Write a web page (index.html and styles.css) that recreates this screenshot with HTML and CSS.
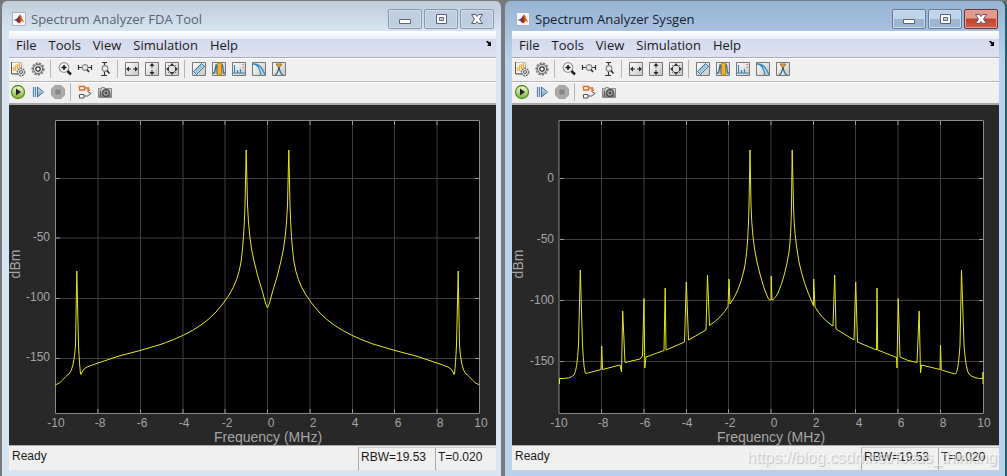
FILE: index.html
```html
<!DOCTYPE html>
<html lang="en">
<head>
<meta charset="utf-8">
<title>Spectrum Analyzer</title>
<link rel="stylesheet" href="styles.css">
</head>
<body>
<svg class="defs" aria-hidden="true">
  <defs>
    <linearGradient id="g-tile" x1="0" y1="0" x2="1" y2="1"><stop offset="0" stop-color="#fff"/><stop offset="1" stop-color="#c4c4c4"/></linearGradient>
    <linearGradient id="g-play" x1="0" y1="0" x2="0" y2="1"><stop offset="0" stop-color="#f4fadf"/><stop offset="1" stop-color="#7db82e"/></linearGradient>
    <linearGradient id="g-step" x1="0" y1="0" x2="0" y2="1"><stop offset="0" stop-color="#d5e8f6"/><stop offset="1" stop-color="#6a9cc8"/></linearGradient>
    <linearGradient id="g-cam" x1="0" y1="0" x2="0" y2="1"><stop offset="0" stop-color="#ddd"/><stop offset="1" stop-color="#777"/></linearGradient>
  </defs>
  <symbol id="logo" viewBox="0 0 14 14"><path d="M.5.5h13v13H.5z" fill="#f7f7f7" stroke="#a9b4c0"/><path d="M1.500 8l3.500-1.500 3-4L6 10.500 4.500 9z" fill="#2b78ac"/><path d="M5 7l3-4.500L6.500 11 4.500 9z" fill="#6b2b3c"/><path d="M8 2.500c1.500 1 2.500 5 4.500 8L10 9 7 11.500 6 10z" fill="#e8641b"/><path d="M8 3l.5 7L7 11.500 6 10z" fill="#9e2a1c"/></symbol>
  <symbol id="gear" viewBox="0 0 16 16"><circle cx="8" cy="8" r="5.800" fill="none" stroke="#777" stroke-width="1.500" stroke-dasharray="2.300 1.150"/><circle cx="8" cy="8" r="4.600" fill="#ddd" stroke="#666"/><circle cx="8" cy="8" r="2.200" fill="#fff" stroke="#333" stroke-width="1.200"/></symbol>
  <symbol id="config" viewBox="0 0 16 16"><path d="M1.500 1.500h10v11h-10z" fill="#fbf7ed" stroke="#bbb"/><path d="M1.500 1v12H9" fill="none" stroke="#555"/><path d="M3.500 10V6M5.500 10V4M7.500 8V3M9.500 7V2" fill="none" stroke="#efb04b" stroke-width="1.400"/><circle cx="11" cy="11" r="3.700" fill="#ddd" stroke="#777" stroke-width="1.400" stroke-dasharray="2 .7"/><circle cx="11" cy="11" r="1.500" fill="#fff" stroke="#555"/></symbol>
  <symbol id="zoom" viewBox="0 0 16 16"><circle cx="7" cy="6.500" r="4.800" fill="#f5f5f5" stroke="#999" stroke-width="1.200"/><path d="M4.500 6.500h5M7 4v5" stroke="#111" stroke-width="1.500"/><path d="M10.500 10l3.500 3.500" stroke="#222" stroke-width="2.500"/></symbol>
  <symbol id="zoom-x" viewBox="0 0 16 16"><path d="M1.500 4v5M14.500 4v5M2 6.500h3M11 6.500h3" fill="none" stroke="#333" stroke-width="1.200"/><circle cx="8" cy="6.500" r="2.800" fill="#eee" stroke="#888" stroke-width="1.200"/><path d="M10 8.500l2 2.500" stroke="#333" stroke-width="1.600"/></symbol>
  <symbol id="zoom-y" viewBox="0 0 16 16"><path d="M5 1.500h5M7.500 1v4M4 14.500h6M7.500 11v3" stroke="#333" stroke-width="1.200"/><circle cx="8" cy="7.500" r="2.800" fill="#eee" stroke="#888" stroke-width="1.200"/><path d="M10 9.500l2.500 3" stroke="#333" stroke-width="1.600"/></symbol>
  <symbol id="tile" viewBox="0 0 16 16"><path d="M1.500 1.500h13v13h-13z" fill="url(#g-tile)" stroke="#777"/></symbol>
  <symbol id="fit-x" viewBox="0 0 16 16"><use href="#tile"/><path d="M2 8l3-2.500v5zM14 8l-3-2.500v5z" fill="#222"/><path d="M4 8h3M9 8h3" stroke="#333"/></symbol>
  <symbol id="fit-y" viewBox="0 0 16 16"><use href="#tile"/><path d="M8 2l2.500 3h-5zM8 14l2.500-3h-5z" fill="#222"/><path d="M8 4v3M8 9v3" stroke="#333"/></symbol>
  <symbol id="fit-xy" viewBox="0 0 16 16"><use href="#tile"/><path d="M8 2l2.500 3h-5zM8 14l2.500-3h-5zM2 8l3-2.500v5zM14 8l-3-2.500v5z" fill="#333"/><path d="M4 4l2 2M12 4l-2 2M4 12l2-2M12 12l-2-2" stroke="#777"/></symbol>
  <symbol id="ruler" viewBox="0 0 16 16"><use href="#tile"/><path d="M2.500 10.500l8-8 3 3-8 8z" fill="#a9d0e8" stroke="#446f91"/><path d="M5 8.500l1 1M7 6.500l1 1M9 4.500l1 1" stroke="#446f91"/></symbol>
  <symbol id="peaks" viewBox="0 0 16 16"><use href="#tile"/><path d="M2 12h1.500l1.500-8h1v9M10 13V4h1.500l1 8H14" fill="none" stroke="#2f759f" stroke-width="1.400"/><path d="M6.500 2h4v12h-4z" fill="#f4ad25" stroke="#c17a0c" stroke-width=".8"/></symbol>
  <symbol id="distort" viewBox="0 0 16 16"><use href="#tile"/><path d="M2 12h1.500V4v8h3V9v3h3V8v4H14" fill="none" stroke="#3985b4" stroke-width="1.200"/><path d="M11.500 3.500h1.500M11.500 6.500h1.500" stroke="#c77"/></symbol>
  <symbol id="ccdf" viewBox="0 0 16 16"><use href="#tile"/><path d="M2 3c5 0 7 5 8 11M2 3c7-1 10 6 12 11" fill="none" stroke="#338fc7" stroke-width="1.300"/></symbol>
  <symbol id="mask" viewBox="0 0 16 16"><use href="#tile"/><path d="M5 3h6L8 7z" fill="#e7a52b" stroke="#a57828"/><path d="M4 14c3-1 3-4 4-8 1 4 1 7 4 8" fill="#dbeaf2" stroke="#39627a" stroke-width="1.200"/></symbol>
  <symbol id="play" viewBox="0 0 16 16"><circle cx="8" cy="8" r="6.500" fill="url(#g-play)" stroke="#5b8a28" stroke-width="1.300"/><path d="M6 4.500l5 3.500-5 3.500z" fill="#222"/></symbol>
  <symbol id="step" viewBox="0 0 16 16"><path d="M3.500 3v10M5.500 3v10" stroke="#5583aa" stroke-width="1.200"/><path d="M7.500 3l6 5-6 5z" fill="url(#g-step)" stroke="#4677a0"/></symbol>
  <symbol id="stop" viewBox="0 0 16 16"><path d="M5 1.500h6L14.500 5v6L11 14.500H5L1.500 11V5z" fill="#aaa" stroke="#a0a0a0"/><path d="M5.500 5.500h5v5h-5z" fill="#858585"/></symbol>
  <symbol id="model" viewBox="0 0 16 16"><path d="M2.500 2.500h5v3.500h-5z" fill="#fff" stroke="#e16b24" stroke-width="1.300"/><path d="M7.500 4h4v2.500" fill="none" stroke="#e16b24" stroke-width="1.300"/><path d="M9 5.500h5l-2.500 2z" fill="#e16b24"/><path d="M2.500 10.500H7V14H2.500z" fill="#fff" stroke="#555"/><path d="M7 12h3.500l3.500-2.500-3.500-2" fill="none" stroke="#555"/></symbol>
  <symbol id="camera" viewBox="0 0 16 16"><path d="M1.500 4.500h3v-1h3v1h7v9h-13z" fill="url(#g-cam)" stroke="#8a8a8a"/><circle cx="9" cy="9" r="3.300" fill="#aaa" stroke="#444" stroke-width="1.200"/><circle cx="9" cy="9" r="1.400" fill="#444"/><path d="M3.500 6.500v6" stroke="#666"/></symbol>
  <symbol id="min" viewBox="0 0 16 16"><path d="M2.500 8.500h11v4h-11z" fill="#fff" stroke="#5c6476"/></symbol>
  <symbol id="max" viewBox="0 0 16 16"><path d="M3.500 3.500h10v9h-10z" fill="#fff" stroke="#5c6476"/><path d="M6.500 6.500h4v3h-4z" fill="#c3d2e5" stroke="#5c6476"/></symbol>
  <symbol id="close" viewBox="0 0 16 16"><path d="M2.500 3.500h4l1.500 2 1.500-2h4L10.500 8l3 4.500h-4L8 10.500l-1.500 2h-4l3-4.500z" fill="#fff" stroke="#5c5c68" stroke-linejoin="round"/></symbol>
  <symbol id="dock" viewBox="0 0 8 8"><path d="M1 2h2l1.500 1.500L6 2.500V7H2l1.500-1.500z" fill="#000"/></symbol>
</svg>

<main class="desktop">
  <section class="window" aria-label="Spectrum Analyzer FDA Tool">
    <header class="titlebar">
      <svg class="logo"><use href="#logo"/></svg>
      <h1 class="title">Spectrum Analyzer FDA Tool</h1>
      <button class="caption" aria-label="Minimize"><svg class="icon"><use href="#min"/></svg></button>
      <button class="caption" aria-label="Maximize"><svg class="icon"><use href="#max"/></svg></button>
      <button class="caption caption-close" aria-label="Close"><svg class="icon"><use href="#close"/></svg></button>
    </header>
    <nav class="menu">
      <button class="menu-item">File</button><button class="menu-item">Tools</button><button class="menu-item">View</button><button class="menu-item">Simulation</button><button class="menu-item">Help</button>
      <button class="dock" aria-label="Dock"><svg class="dock-icon"><use href="#dock"/></svg></button>
    </nav>
    <div class="toolbar">
      <button class="tool" aria-label="Configuration"><svg class="icon"><use href="#config"/></svg></button>
      <button class="tool" aria-label="Style"><svg class="icon"><use href="#gear"/></svg></button>
      <span class="sep"></span>
      <button class="tool" aria-label="Zoom"><svg class="icon"><use href="#zoom"/></svg></button>
      <button class="tool" aria-label="Zoom X"><svg class="icon"><use href="#zoom-x"/></svg></button>
      <button class="tool" aria-label="Zoom Y"><svg class="icon"><use href="#zoom-y"/></svg></button>
      <span class="sep"></span>
      <button class="tool" aria-label="Fit X"><svg class="icon"><use href="#fit-x"/></svg></button>
      <button class="tool" aria-label="Fit Y"><svg class="icon"><use href="#fit-y"/></svg></button>
      <button class="tool" aria-label="Fit both"><svg class="icon"><use href="#fit-xy"/></svg></button>
      <span class="sep"></span>
      <button class="tool" aria-label="Cursor measurements"><svg class="icon"><use href="#ruler"/></svg></button>
      <button class="tool" aria-label="Channel measurements"><svg class="icon"><use href="#peaks"/></svg></button>
      <button class="tool" aria-label="Distortion"><svg class="icon"><use href="#distort"/></svg></button>
      <button class="tool" aria-label="CCDF"><svg class="icon"><use href="#ccdf"/></svg></button>
      <button class="tool" aria-label="Spectral mask"><svg class="icon"><use href="#mask"/></svg></button>
    </div>
    <div class="toolbar toolbar-run">
      <button class="tool" aria-label="Run"><svg class="icon"><use href="#play"/></svg></button>
      <button class="tool" aria-label="Step forward"><svg class="icon"><use href="#step"/></svg></button>
      <button class="tool" aria-label="Stop"><svg class="icon"><use href="#stop"/></svg></button>
      <span class="sep"></span>
      <button class="tool" aria-label="Highlight block"><svg class="icon"><use href="#model"/></svg></button>
      <button class="tool" aria-label="Snapshot"><svg class="icon"><use href="#camera"/></svg></button>
    </div>
    <svg class="chart" viewBox="9 105 487 340" role="img" aria-label="Power in dBm against frequency in MHz">
      <path class="plot-bg" d="M55 120h425v294H55z"/>
      <path class="grid" d="M98 121v293M140.500 121v293M183 121v293M225 121v293M267.500 121v293M310 121v293M352.500 121v293M394.500 121v293M437 121v293M56 178.500h423M56 238h423M56 298.500h423M56 358.500h423"/>
      <path class="frame" d="M55.500 120.500h424v293h-424z"/>
      <path class="ticks" d="M98 121v4M140.500 121v4M183 121v4M225 121v4M267.500 121v4M310 121v4M352.500 121v4M394.500 121v4M437 121v4M98 413v-4M140.500 413v-4M183 413v-4M225 413v-4M267.500 413v-4M310 413v-4M352.500 413v-4M394.500 413v-4M437 413v-4M56 178.500h4M56 238h4M56 298.500h4M56 358.500h4M479 178.500h-4M479 238h-4M479 298.500h-4M479 358.500h-4"/>
      <g id="half-fda"><path class="trace" d="M55.500 384.500C61 384 64 377 69 374Q74 369 75.500 345L76.800 271 78.500 345Q79.500 365 80.500 374Q81 376 82 372Q83 369 87 367Q92 365 98 363L119 356 140 350.500 162 344Q185 336 201 325Q217 314 229 295Q238 281 241 262Q244 240 245 205L246.200 150 247.500 205Q249 241 254 261Q257 275 262 290L265.500 303Q267 307 267.500 308"/></g>
      <use href="#half-fda" transform="translate(535 0) scale(-1 1)"/>
      <g class="tick-text tick-y"><text x="50" y="181">0</text><text x="50" y="241">-50</text><text x="50" y="301">-100</text><text x="50" y="361">-150</text></g>
      <g class="tick-text tick-x"><text x="56" y="427">-10</text><text x="100" y="427">-8</text><text x="142" y="427">-6</text><text x="184" y="427">-4</text><text x="227" y="427">-2</text><text x="271" y="427">0</text><text x="313" y="427">2</text><text x="355" y="427">4</text><text x="398" y="427">6</text><text x="440" y="427">8</text><text x="481" y="427">10</text></g>
      <text class="axis-text" x="268" y="442">Frequency (MHz)</text>
      <text class="axis-text" transform="translate(20 264) rotate(-90)">dBm</text>
    </svg>
    <footer class="status"><span class="ready">Ready</span><span class="cell cell-rbw">RBW=19.53</span><span class="cell">T=0.020</span></footer>
  </section>

  <section class="window window-active" aria-label="Spectrum Analyzer Sysgen">
    <header class="titlebar">
      <svg class="logo"><use href="#logo"/></svg>
      <h1 class="title">Spectrum Analyzer Sysgen</h1>
      <button class="caption" aria-label="Minimize"><svg class="icon"><use href="#min"/></svg></button>
      <button class="caption" aria-label="Maximize"><svg class="icon"><use href="#max"/></svg></button>
      <button class="caption caption-close" aria-label="Close"><svg class="icon"><use href="#close"/></svg></button>
    </header>
    <nav class="menu">
      <button class="menu-item">File</button><button class="menu-item">Tools</button><button class="menu-item">View</button><button class="menu-item">Simulation</button><button class="menu-item">Help</button>
      <button class="dock" aria-label="Dock"><svg class="dock-icon"><use href="#dock"/></svg></button>
    </nav>
    <div class="toolbar">
      <button class="tool" aria-label="Configuration"><svg class="icon"><use href="#config"/></svg></button>
      <button class="tool" aria-label="Style"><svg class="icon"><use href="#gear"/></svg></button>
      <span class="sep"></span>
      <button class="tool" aria-label="Zoom"><svg class="icon"><use href="#zoom"/></svg></button>
      <button class="tool" aria-label="Zoom X"><svg class="icon"><use href="#zoom-x"/></svg></button>
      <button class="tool" aria-label="Zoom Y"><svg class="icon"><use href="#zoom-y"/></svg></button>
      <span class="sep"></span>
      <button class="tool" aria-label="Fit X"><svg class="icon"><use href="#fit-x"/></svg></button>
      <button class="tool" aria-label="Fit Y"><svg class="icon"><use href="#fit-y"/></svg></button>
      <button class="tool" aria-label="Fit both"><svg class="icon"><use href="#fit-xy"/></svg></button>
      <span class="sep"></span>
      <button class="tool" aria-label="Cursor measurements"><svg class="icon"><use href="#ruler"/></svg></button>
      <button class="tool" aria-label="Channel measurements"><svg class="icon"><use href="#peaks"/></svg></button>
      <button class="tool" aria-label="Distortion"><svg class="icon"><use href="#distort"/></svg></button>
      <button class="tool" aria-label="CCDF"><svg class="icon"><use href="#ccdf"/></svg></button>
      <button class="tool" aria-label="Spectral mask"><svg class="icon"><use href="#mask"/></svg></button>
    </div>
    <div class="toolbar toolbar-run">
      <button class="tool" aria-label="Run"><svg class="icon"><use href="#play"/></svg></button>
      <button class="tool" aria-label="Step forward"><svg class="icon"><use href="#step"/></svg></button>
      <button class="tool" aria-label="Stop"><svg class="icon"><use href="#stop"/></svg></button>
      <span class="sep"></span>
      <button class="tool" aria-label="Highlight block"><svg class="icon"><use href="#model"/></svg></button>
      <button class="tool" aria-label="Snapshot"><svg class="icon"><use href="#camera"/></svg></button>
    </div>
    <svg class="chart" viewBox="512 105 487 340" role="img" aria-label="Power in dBm against frequency in MHz">
      <path class="plot-bg" d="M559 120h425v294H559z"/>
      <path class="grid" d="M601.500 121v293M644 121v293M686.500 121v293M728.500 121v293M771 121v293M813.500 121v293M855.500 121v293M898 121v293M940.500 121v293M560 178.500h423M560 239.500h423M560 300.500h423M560 361.500h423"/>
      <path class="frame" d="M559 120.500h424.500v293H559z"/>
      <path class="ticks" d="M601.500 121v4M644 121v4M686.500 121v4M728.500 121v4M771 121v4M813.500 121v4M855.500 121v4M898 121v4M940.500 121v4M601.500 413v-4M644 413v-4M686.500 413v-4M728.500 413v-4M771 413v-4M813.500 413v-4M855.500 413v-4M898 413v-4M940.500 413v-4M560 178.500h4M560 239.500h4M560 300.500h4M560 361.500h4M983 178.500h-4M983 239.500h-4M983 300.500h-4M983 361.500h-4"/>
      <path class="trace" d="M559.500 384V378.500Q570 379 574 375Q577 371 578.500 345L580.300 270 582.500 345Q584 374 586 373.500L601 369.500 601.700 346 602.500 369.500 620 365 621.500 372 622.700 311 625 362.500 640 359 642.500 356 644 298.500 644.800 368 646 357 664 350.500 665.200 288 666 350 684.500 342 686.300 282 688.500 340 706 330 707.500 275 709.500 325.500Q722 317 728 306.500L729 279 730 304Q739 292 744 270Q748 252 749 205L750 150 751 205Q752 240 757 262Q763 288 768.500 299Q770 300.500 771 300L771.200 276 772 300Q774 300 778 293Q785 277 789 252Q791 236 791.500 205L792.200 150 793.500 205Q794 235 799 262Q804 285 812 302L813.500 306 813.700 279 815 307Q822 319 833 326L834.700 275 836 329 854 340 855.700 282 857.500 342 876.500 350 877 288 877.700 350 896.500 357.500 897 368 898.200 298.500 900 357Q907 361 917 362.500L919.200 311 920.500 373 921.500 365 940 369.500 940.500 345 941.300 370 955 374Q958 375 960 345L961.500 270 964 345Q966 371 969 374Q974 379 983 378.500V372V384"/>
      <g class="tick-text tick-y"><text x="554" y="182">0</text><text x="554" y="243">-50</text><text x="554" y="304">-100</text><text x="554" y="365">-150</text></g>
      <g class="tick-text tick-x"><text x="559" y="427">-10</text><text x="603" y="427">-8</text><text x="645" y="427">-6</text><text x="687" y="427">-4</text><text x="730" y="427">-2</text><text x="774" y="427">0</text><text x="816" y="427">2</text><text x="859" y="427">4</text><text x="901" y="427">6</text><text x="943" y="427">8</text><text x="984" y="427">10</text></g>
      <text class="axis-text" x="771" y="442">Frequency (MHz)</text>
      <text class="axis-text" transform="translate(523 264) rotate(-90)">dBm</text>
    </svg>
    <footer class="status"><span class="ready">Ready</span><span class="cell cell-rbw">RBW=19.53</span><span class="cell">T=0.020</span><span class="watermark">https://blog.csdn.net/focus_thinking</span></footer>
  </section>
</main>
</body>
</html>
```

FILE: styles.css
```css
* { box-sizing: border-box; }

body {
  margin: 0;
  background: #777;
  font: 12px/16px "Liberation Sans", Arial, sans-serif;
  color: #1a1a1a;
}

button {
  margin: 0;
  padding: 0;
  border: 0;
  background: none;
  font: inherit;
  color: inherit;
}

svg { display: block; }

.defs { position: absolute; width: 0; height: 0; }

.desktop {
  display: grid;
  grid-template-columns: 503fr 504fr;
  min-height: 100vh;
}

.window {
  min-width: 0;
  padding: 1px 5px 6px 7px;
  border: solid #777b80;
  border-width: 1px 2px 0;
  border-radius: 7px 7px 0 0;
  background: linear-gradient(#bfcddb, #d7e4f2 30px, #d7e4f2);
}

.window-active {
  padding-right: 6px;
  border-right-color: #20606c;
  background: linear-gradient(#98b4d2, #b9d1ea 60px, #b9d1ea);
}

.titlebar {
  display: flex;
  gap: 2px;
  height: 29px;
  padding: 7px 2px 0 3px;
}

.window-active .titlebar { padding: 7px 1px 0 4px; }

.logo { width: 14px; height: 14px; margin-top: 3px; }

.title {
  flex: 1;
  margin: 0 0 0 3px;
  font: 13px/21px "Open Sans", "Noto Sans", sans-serif;
  color: #59636d;
}

.window-active .title { color: #14202e; }

.caption {
  display: grid;
  place-items: center;
  width: 34px;
  height: 20px;
  border: 1px solid #8797ad;
  border-radius: 2px;
  background: #bfcee0;
  box-shadow: inset 0 0 0 1px #d3deea;
}

.window-active .caption {
  border-color: #637b99;
  background: linear-gradient(#c0d3e8 50%, #9cb6d2 50%);
  box-shadow: inset 0 0 0 1px #c9dbed;
}

.window-active .caption-close {
  border-color: #6d3038;
  background: linear-gradient(#e29a8c 45%, #c2402c 50%, #cc6248);
  box-shadow: inset 0 0 0 1px #e5a396;
}

.icon { width: 16px; height: 16px; }

.menu {
  display: flex;
  align-items: center;
  gap: 12px;
  height: 27px;
  padding: 2px 3px 0 7px;
  border-bottom: 1px solid #a9adb4;
  background: linear-gradient(#fff, #e8ebf6 8px, #d4daee 8px, #dde3f3);
}

.menu-item { font: 13px/20px "Open Sans", "Noto Sans", sans-serif; }

.dock { margin: 0 0 5px auto; }
.dock-icon { width: 8px; height: 8px; }

.toolbar {
  display: flex;
  align-items: center;
  gap: 4px;
  height: 24px;
  padding: 0 0 2px 1px;
  border-top: 1px solid #fff;
  border-bottom: 1px solid #b4b4b4;
  background: #f0f0f0;
}

.window-active .toolbar { padding-left: 2px; }

.toolbar-run { height: 23px; border-bottom: 2px solid #a9a9a9; }

.sep { width: 3px; height: 18px; border-left: 1px solid #b5b5b5; }

.chart { width: 100%; height: auto; background: #282828; }

.plot-bg { fill: #000; }
.grid { fill: none; stroke: #3e3e3e; }
.frame { fill: none; stroke: #8a8a8a; }
.ticks { fill: none; stroke: #9a9a9a; }
.trace { fill: none; stroke: #e6e61c; stroke-linejoin: round; }
.tick-text { font-size: 12px; fill: #a5a5a5; }
.tick-x { text-anchor: middle; }
.tick-y { text-anchor: end; }
.axis-text { font-size: 14px; fill: #a5a5a5; text-anchor: middle; }

.status {
  position: relative;
  display: flex;
  height: 25px;
  padding-top: 1px;
  border-top: 1px solid #aaa;
  background: #f0f0f0;
}

.ready { flex: 1; padding: 1px 3px; }

.cell {
  width: 61px;
  padding: 1px 2px;
  border-left: 1px solid #aaa;
  border-top: 1px solid #ccc;
}

.cell-rbw { width: 77px; }

.watermark {
  position: absolute;
  right: 2px;
  top: 2px;
  font-size: 16px;
  line-height: 20px;
  color: rgba(255, 255, 255, 0.6);
  text-shadow: 1px 1px 1px rgba(0, 0, 0, 0.2);
  white-space: nowrap;
}
```
